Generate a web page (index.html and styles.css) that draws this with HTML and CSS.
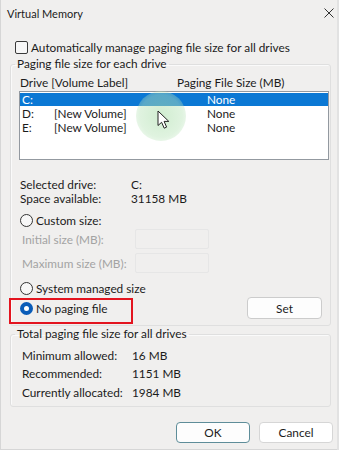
FILE: index.html
```html
<!DOCTYPE html>
<html lang="en">
  <head>
    <meta charset="UTF-8" />
    <title>Virtual Memory</title>
    <link rel="stylesheet" href="styles.css">
  </head>
  <body>
    <div class="window">
      <div class="titlebar">
        <span class="title">Virtual Memory</span>
        <svg class="close" width="10" height="10" viewBox="0 0 10 10">
          <path d="M0.5 0.5 L9.5 9.5 M9.5 0.5 L0.5 9.5" stroke="#333" stroke-width="1" fill="none" />
        </svg>
      </div>

      <div class="content">
        <label class="check-row">
          <span class="checkbox"></span>
          Automatically manage paging file size for all drives
        </label>

        <fieldset class="group group-drives">
          <legend>Paging file size for each drive</legend>

          <div class="list-head">
            <span class="head-drive">Drive [Volume Label]</span>
            <span class="head-size">Paging File Size (MB)</span>
          </div>

          <div class="listbox">
            <div class="list-row selected">
              <span class="col-drive">C:</span>
              <span class="col-label"></span>
              <span class="col-size">None</span>
            </div>
            <div class="list-row">
              <span class="col-drive">D:</span>
              <span class="col-label">[New Volume]</span>
              <span class="col-size">None</span>
            </div>
            <div class="list-row">
              <span class="col-drive">E:</span>
              <span class="col-label">[New Volume]</span>
              <span class="col-size">None</span>
            </div>
            <!-- touch highlight and pointer from the recording -->
            <span class="touch"></span>
            <svg class="pointer" width="14" height="20" viewBox="0 0 14 20">
              <path d="M1 1 L1 15.5 L4.6 12.3 L7.2 18.2 L9.6 17.1 L7.1 11.4 L11.8 11.4 Z" fill="#fff" stroke="#222" stroke-width="1" stroke-linejoin="round" />
            </svg>
          </div>

          <div class="info">
            <div class="info-row"><span class="info-key">Selected drive:</span><span>C:</span></div>
            <div class="info-row"><span class="info-key">Space available:</span><span>31158 MB</span></div>
          </div>

          <label class="radio-row custom">
            <span class="radio"></span>
            Custom size:
          </label>

          <div class="field-row first">
            <span class="field-label">Initial size (MB):</span>
            <span class="field-box"></span>
          </div>
          <div class="field-row">
            <span class="field-label">Maximum size (MB):</span>
            <span class="field-box"></span>
          </div>

          <label class="radio-row system">
            <span class="radio"></span>
            System managed size
          </label>

          <div class="set-row">
            <label class="radio-row none">
              <span class="radio checked"></span>
              No paging file
              <span class="mark"></span>
            </label>
            <button class="btn btn-set">Set</button>
          </div>
        </fieldset>

        <fieldset class="group group-total">
          <legend>Total paging file size for all drives</legend>
          <div class="total-row first"><span class="total-key">Minimum allowed:</span><span>16 MB</span></div>
          <div class="total-row"><span class="total-key">Recommended:</span><span>1151 MB</span></div>
          <div class="total-row"><span class="total-key">Currently allocated:</span><span>1984 MB</span></div>
        </fieldset>

        <div class="actions">
          <button class="btn btn-ok">OK</button>
          <button class="btn btn-cancel">Cancel</button>
        </div>
      </div>
    </div>
  </body>
</html>
```

FILE: styles.css
```css
body {
  margin: 0;
  background-color: #f0f0f0;
  font-family: Lato, "Liberation Sans", sans-serif;
  font-size: 11.8px;
  color: #1b1b1b;
}

.window {
  width: 339px;
  height: 450px;
  box-sizing: border-box;
  background-color: #f0efee;
  box-shadow: inset 1px 0 0 #d6d6d6, inset -2px 0 0 #e2e2e2, inset 0 -1px 0 #d6d6d6;
  overflow: hidden;
}

.titlebar {
  height: 26px;
  display: flex;
  align-items: center;
  justify-content: space-between;
  padding: 0 5px 0 7px;
  font-size: 11px;
}

.close {
  display: block;
}

.content {
  padding: 0 8px 0 10px;
}

.check-row {
  display: flex;
  align-items: center;
  height: 14px;
  margin: 14px 0 0 5px;
}

.checkbox {
  width: 11px;
  height: 11px;
  border: 1px solid #3a3a3a;
  border-radius: 2px;
  background-color: #f7f7f7;
  margin-right: 3px;
}

.group {
  margin: 0;
  padding: 0;
  border: 1px solid #dfdfdf;
  border-radius: 3px;
  box-shadow: inset 1px 1px 0 #fafafa;
}

.group legend {
  margin-left: 4px;
  padding: 0 2px;
  line-height: 14px;
}

.group-drives {
  margin-top: 3px;
  padding-bottom: 6px;
}

.list-head {
  display: flex;
  height: 14px;
  align-items: center;
  margin-top: 4px;
  padding-left: 9px;
}

.head-drive {
  width: 157px;
}

.listbox {
  position: relative;
  height: 66px;
  margin: 2px 1px 0 8px;
  border: 1px solid #9399a0;
  background-color: #fff;
  padding-top: 1px;
}

.list-row {
  display: flex;
  height: 13px;
  align-items: center;
  padding-left: 2px;
}

.list-row + .list-row {
  margin-top: 1px;
}

.list-row.selected {
  background-color: #0b78d4;
  color: #fff;
}

.col-drive {
  width: 32px;
}

.col-label {
  width: 153px;
}

.touch {
  position: absolute;
  left: 116px;
  top: -1px;
  width: 50px;
  height: 50px;
  border-radius: 50%;
  background: radial-gradient(circle, rgba(170, 222, 170, 0.55) 0%, rgba(185, 228, 185, 0.45) 60%, rgba(200, 235, 200, 0) 100%);
}

.pointer {
  position: absolute;
  left: 137px;
  top: 18px;
}

.info {
  margin: 17px 0 0 9px;
}

.info-row {
  display: flex;
  height: 14px;
  align-items: center;
}

.info-key {
  width: 111px;
}

.radio-row {
  display: flex;
  align-items: center;
  height: 14px;
  margin-left: 9px;
}

.radio {
  width: 11px;
  height: 11px;
  border: 1px solid #333;
  border-radius: 50%;
  background-color: #f7f7f7;
  margin-right: 3px;
  box-sizing: content-box;
}

.radio.checked {
  width: 5px;
  height: 5px;
  border: 4px solid #0a5cb8;
  background-color: #fff;
}

.custom {
  margin-top: 8px;
}

.field-row {
  display: flex;
  align-items: center;
  height: 20px;
  margin: 4px 0 0 11px;
  color: #a3a3a3;
}

.field-row.first {
  margin-top: 2px;
}

.field-label {
  width: 113px;
}

.field-box {
  width: 72px;
  height: 18px;
  border: 1px solid #e6e6e6;
  border-radius: 2px;
}

.system {
  margin-top: 8px;
}

.set-row {
  display: flex;
  align-items: center;
  justify-content: space-between;
  height: 22px;
  margin: 2px 8px 0 0;
}

.radio-row.none {
  position: relative;
}

.mark {
  position: absolute;
  left: -11px;
  top: -3px;
  width: 120px;
  height: 22px;
  border: 2px solid #e3141f;
}

.btn {
  font-family: inherit;
  font-size: 11.8px;
  color: #1b1b1b;
  height: 22px;
  width: 75px;
  padding: 0;
  border: 1px solid #cccccc;
  border-radius: 4px;
  background-color: #fdfdfd;
}

.group-total {
  margin-top: 1px;
  padding-bottom: 7px;
}

.total-row {
  display: flex;
  align-items: center;
  height: 14px;
  margin: 4px 0 0 11px;
}

.total-row.first {
  margin-top: 7px;
}

.total-row + .total-row + .total-row {
  margin-top: 5px;
}

.total-key {
  width: 110px;
}

.actions {
  display: flex;
  justify-content: flex-end;
  gap: 9px;
  margin: 15px -2px 0 0;
}

.btn-ok {
  width: 74px;
  height: 21px;
  border-color: #5e8d99;
}

.btn-cancel {
  width: 74px;
  height: 21px;
  border-color: #d6d6d6;
  background-color: #fff;
}
```
